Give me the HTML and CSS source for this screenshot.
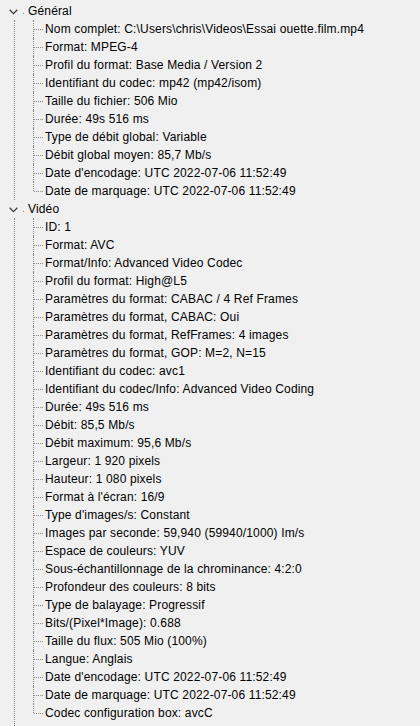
FILE: index.html
```html
<!DOCTYPE html>
<html lang="fr">
<head>
    <meta charset="UTF-8">
    <title>MediaInfo - Arborescence</title>
    <link rel="stylesheet" href="styles.css">
</head>
<body>

<ul class="tree">
    <li class="node">
        <div class="node-head">
            <svg class="chevron" width="9" height="6" viewBox="0 0 9 6"><path d="M0.7 0.8 L4.5 4.6 L8.3 0.8" fill="none" stroke="#3c3c3c" stroke-width="1.3"/></svg>
            <span class="node-label">Général</span>
        </div>
        <ul class="leaves">
            <li>Nom complet: C:\Users\chris\Videos\Essai ouette.film.mp4</li>
            <li>Format: MPEG-4</li>
            <li>Profil du format: Base Media / Version 2</li>
            <li>Identifiant du codec: mp42 (mp42/isom)</li>
            <li>Taille du fichier: 506 Mio</li>
            <li>Durée: 49s 516 ms</li>
            <li>Type de débit global: Variable</li>
            <li>Débit global moyen: 85,7 Mb/s</li>
            <li>Date d'encodage: UTC 2022-07-06 11:52:49</li>
            <li>Date de marquage: UTC 2022-07-06 11:52:49</li>
        </ul>
    </li>
    <li class="node">
        <div class="node-head">
            <svg class="chevron" width="9" height="6" viewBox="0 0 9 6"><path d="M0.7 0.8 L4.5 4.6 L8.3 0.8" fill="none" stroke="#3c3c3c" stroke-width="1.3"/></svg>
            <span class="node-label">Vidéo</span>
        </div>
        <ul class="leaves">
            <li>ID: 1</li>
            <li>Format: AVC</li>
            <li>Format/Info: Advanced Video Codec</li>
            <li>Profil du format: High@L5</li>
            <li>Paramètres du format: CABAC / 4 Ref Frames</li>
            <li>Paramètres du format, CABAC: Oui</li>
            <li>Paramètres du format, RefFrames: 4 images</li>
            <li>Paramètres du format, GOP: M=2, N=15</li>
            <li>Identifiant du codec: avc1</li>
            <li>Identifiant du codec/Info: Advanced Video Coding</li>
            <li>Durée: 49s 516 ms</li>
            <li>Débit: 85,5 Mb/s</li>
            <li>Débit maximum: 95,6 Mb/s</li>
            <li>Largeur: 1 920 pixels</li>
            <li>Hauteur: 1 080 pixels</li>
            <li>Format à l'écran: 16/9</li>
            <li>Type d'images/s: Constant</li>
            <li>Images par seconde: 59,940 (59940/1000) Im/s</li>
            <li>Espace de couleurs: YUV</li>
            <li>Sous-échantillonnage de la chrominance: 4:2:0</li>
            <li>Profondeur des couleurs: 8 bits</li>
            <li>Type de balayage: Progressif</li>
            <li>Bits/(Pixel*Image): 0.688</li>
            <li>Taille du flux: 505 Mio (100%)</li>
            <li>Langue: Anglais</li>
            <li>Date d'encodage: UTC 2022-07-06 11:52:49</li>
            <li>Date de marquage: UTC 2022-07-06 11:52:49</li>
            <li>Codec configuration box: avcC</li>
        </ul>
    </li>
</ul>

</body>
</html>
```

FILE: styles.css
```css
html
{
    font-family: "Liberation Sans", Arial, sans-serif;
    font-size: 12px;
    letter-spacing: 0.15px;
    color: #000;
    background: #f0f0f0;
}

body
{
    margin: 0;
}

ul
{
    list-style: none;
    margin: 0;
    padding: 0;
}

.tree
{
    padding-top: 2px;
}

.node
{
    position: relative;
}

.node:last-child
{
    padding-bottom: 4px;
}

/* trait vertical de la racine */
.node::before
{
    content: "";
    position: absolute;
    left: 14px;
    top: 18px;
    bottom: 0;
    border-left: 1px dotted #8a8a8a;
}

.node-head
{
    display: flex;
    align-items: center;
    height: 18px;
}

.chevron
{
    margin-left: 9px;
    margin-top: 1px;
}

.node-label
{
    position: relative;
    margin-left: 9px;
    padding-left: 1px;
}

.node-label::before
{
    content: "";
    position: absolute;
    left: -4px;
    top: 9px;
    width: 1px;
    height: 1px;
    background: #8a8a8a;
}

.leaves
{
    margin-left: 33px;
}

.leaves li
{
    position: relative;
    height: 18px;
    line-height: 18px;
    padding-left: 12px;
    white-space: nowrap;
}

.leaves li::before
{
    content: "";
    position: absolute;
    left: 0;
    top: 0;
    bottom: 0;
    border-left: 1px dotted #8a8a8a;
}

.leaves li:last-child::before
{
    bottom: 9px;
}

.leaves li::after
{
    content: "";
    position: absolute;
    left: 1px;
    top: 9px;
    width: 9px;
    border-top: 1px dotted #8a8a8a;
}
```
